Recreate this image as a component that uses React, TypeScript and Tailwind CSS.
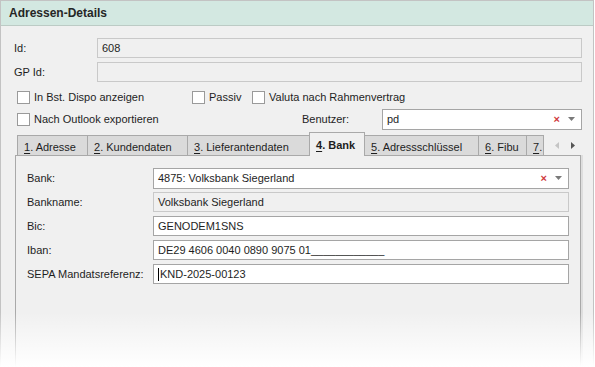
import { ReactNode } from "react";

const font = "font-['Liberation_Sans',Arial,sans-serif]";

function Checkbox({ label, className = "" }: { label: string; className?: string }) {
  return (
    <label className={`flex items-center gap-[4px] ${className}`}>
      <span className="w-[13px] h-[13px] border border-[#9a9a9a] bg-white shrink-0" />
      <span>{label}</span>
    </label>
  );
}

function Combo({ value, className = "" }: { value: string; className?: string }) {
  return (
    <div
      className={`flex items-center h-[21px] border border-[#a5a5a5] bg-white pl-[4px] pr-[6px] ${className}`}
    >
      <span className="flex-1">{value}</span>
      <span className="text-[#d0383c] text-[11px] font-bold leading-none mr-[8px]">×</span>
      <svg width="7" height="4" viewBox="0 0 7 4">
        <path d="M0 0h7L3.5 4z" fill="#7a7a7a" />
      </svg>
    </div>
  );
}

function Field({
  children,
  readOnly = false,
  className = "",
}: {
  children?: ReactNode;
  readOnly?: boolean;
  className?: string;
}) {
  return (
    <div
      className={`flex items-center h-[20px] pl-[4px] border ${
        readOnly ? "border-[#c9c9c9] bg-[#f0f0f0]" : "border-[#a5a5a5] bg-white"
      } ${className}`}
    >
      {children}
    </div>
  );
}

const tabs: ReadonlyArray<{ num: string; rest: string; width: string; active?: boolean }> = [
  { num: "1", rest: ". Adresse", width: "w-[71px]" },
  { num: "2", rest: ". Kundendaten", width: "w-[100px]" },
  { num: "3", rest: ". Lieferantendaten", width: "w-[122px]" },
  { num: "4", rest: ". Bank", width: "w-[56px]", active: true },
  { num: "5", rest: ". Adressschlüssel", width: "w-[114px]" },
  { num: "6", rest: ". Fibu", width: "w-[48px]" },
  { num: "7", rest: ".", width: "w-[17px]" },
];

function BankRow({ label, children }: { label: string; children: ReactNode }) {
  return (
    <div className="flex items-center h-[20px]">
      <span className="w-[126px] shrink-0">{label}</span>
      <div className="flex-1">{children}</div>
    </div>
  );
}

export default function App() {
  return (
    <div
      className={`relative w-[595px] h-[367px] overflow-hidden bg-white text-[11px] text-[#1e1e1e] ${font}`}
    >
      <div className="w-[594px] h-full border-x border-t border-[#c3c3c3] bg-[#f0f0f0] flex flex-col">
        {/* Kopfzeile */}
        <div className="h-[25px] shrink-0 bg-[#d3e8e1] border-b border-[#bccbc5] flex items-center pl-[8px]">
          <span className="text-[12px] font-bold text-[#262626]">Adressen-Details</span>
        </div>

        <div className="pl-[13px] pr-[11px] pt-[12px] flex flex-col">
          <div className="flex items-center h-[20px]">
            <span className="w-[83px] shrink-0">Id:</span>
            <Field readOnly className="flex-1">608</Field>
          </div>
          <div className="flex items-center h-[20px] mt-[4px]">
            <span className="w-[83px] shrink-0">GP Id:</span>
            <Field readOnly className="flex-1" />
          </div>

          <div className="flex items-center h-[16px] mt-[7px] pl-[3px]">
            <Checkbox label="In Bst. Dispo anzeigen" className="w-[175px]" />
            <Checkbox label="Passiv" className="w-[60px]" />
            <Checkbox label="Valuta nach Rahmenvertrag" />
          </div>

          <div className="flex items-center h-[22px] mt-[3px] pl-[3px]">
            <Checkbox label="Nach Outlook exportieren" className="w-[285px]" />
            <span className="w-[80px] shrink-0">Benutzer:</span>
            <Combo value="pd" className="flex-1" />
          </div>
        </div>

        {/* Reiter */}
        <div className="flex items-end h-[24px] mt-[1px] pl-[16px] pr-[12px]">
          {tabs.map((tab) => (
            <div
              key={tab.num}
              className={`${tab.width} shrink-0 overflow-hidden whitespace-nowrap border-t border-r border-[#a9a9a9] ${
                tab.active
                  ? "h-[24px] bg-[#f0f0f0] border-l font-bold pl-[6px] pt-[4px] relative top-[1px] -ml-px"
                  : "h-[20px] bg-[#dadada] pl-[6px] pt-[3px]"
              } ${tab.num === "1" ? "border-l" : ""}`}
            >
              <span className="underline underline-offset-2">{tab.num}</span>
              {tab.rest}
            </div>
          ))}
          <div className="flex-1 flex items-center justify-end gap-[12px] h-[20px] pr-[6px]">
            <svg width="4" height="7" viewBox="0 0 4 7">
              <path d="M4 0v7L0 3.5z" fill="#c4c4c4" />
            </svg>
            <svg width="4" height="7" viewBox="0 0 4 7">
              <path d="M0 0v7l4-3.5z" fill="#555" />
            </svg>
          </div>
        </div>

        {/* Inhalt Bank */}
        <div className="flex-1 ml-[14px] mr-[12px] border border-[#a9a9a9] border-b-0 bg-[#f0f0f0] pl-[11px] pr-[11px] pt-[12px] flex flex-col gap-[4px] shadow-[2px_0_0_#dedede]">
          <BankRow label="Bank:">
            <Combo value="4875: Volksbank Siegerland" className="h-[20px]" />
          </BankRow>
          <BankRow label="Bankname:">
            <Field readOnly>Volksbank Siegerland</Field>
          </BankRow>
          <BankRow label="Bic:">
            <Field>GENODEM1SNS</Field>
          </BankRow>
          <BankRow label="Iban:">
            <Field>DE29 4606 0040 0890 9075 01____________</Field>
          </BankRow>
          <BankRow label="SEPA Mandatsreferenz:">
            <Field>
              <span className="w-px h-[13px] bg-black mr-px" />
              KND-2025-00123
            </Field>
          </BankRow>
        </div>
      </div>

      {/* Ausblendung nach unten */}
      <div className="pointer-events-none absolute left-0 right-0 bottom-0 h-[55px] bg-gradient-to-b from-transparent to-white" />
    </div>
  );
}
